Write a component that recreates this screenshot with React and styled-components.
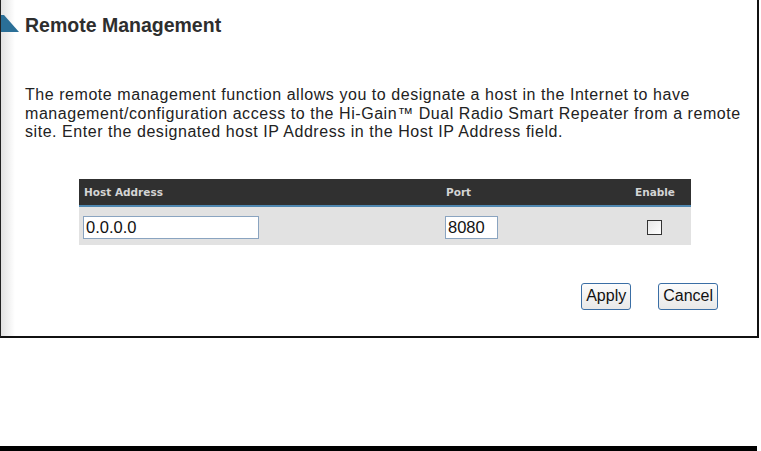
import React from "react";
import styled, { createGlobalStyle } from "styled-components";

const Global = createGlobalStyle`
  html, body { margin: 0; padding: 0; background: #fff; }
  body { width: 761px; height: 451px; overflow: hidden; font-family: "Liberation Sans", Arial, sans-serif; }
`;

const Page = styled.div`
  display: flex;
  flex-direction: column;
  width: 761px;
  height: 451px;
`;

const Frame = styled.div`
  width: 759px;
  height: 338px;
  box-sizing: border-box;
  border-left: 1px solid #222;
  border-right: 2px solid #111;
  border-bottom: 2px solid #111;
  background: linear-gradient(to right, #e2e2e2 0px, #fff 14px);
  position: relative;
  display: flex;
  flex-direction: column;
  padding: 14px 0 0 24px;
`;

const Marker = styled.svg`
  position: absolute;
  left: 0;
  top: 15px;
`;

const Title = styled.h1`
  margin: 0;
  font-size: 19.5px;
  line-height: 22px;
  font-weight: bold;
  color: #2e2e2e;
`;

const Para = styled.p`
  margin: 50px 0 0 0;
  font-size: 16px;
  line-height: 18.5px;
  letter-spacing: 0.55px;
  color: #222;
  width: 730px;
`;

const Table = styled.div`
  margin: 37px 0 0 54px;
  width: 612px;
  display: flex;
  flex-direction: column;
`;

const cols = `grid-template-columns: 362px 1fr 80px;`;

const HeadRow = styled.div`
  display: grid;
  ${cols}
  height: 25px;
  align-items: center;
  background: #303030;
  border-bottom: 2px solid #4f87b0;
  padding: 1px 16px 0 5px;
  box-sizing: content-box;
  font-family: "DejaVu Sans", Verdana, sans-serif;
  font-size: 10.5px;
  font-weight: bold;
  color: #d4d4d4;
`;

const HeadCell = styled.div`
  text-align: ${(p) => p.align || "left"};
`;

const DataRow = styled.div`
  display: grid;
  ${cols}
  height: 38px;
  box-sizing: border-box;
  align-items: start;
  background: #e2e2e2;
  padding: 9px 16px 0 4px;
`;

const TextInput = styled.input`
  box-sizing: border-box;
  width: ${(p) => p.w}px;
  height: 23px;
  border: 1px solid #8aa4c0;
  background: #fff;
  font-family: "Liberation Sans", Arial, sans-serif;
  font-size: 16.5px;
  color: #111;
  padding: 1px 2px;
  outline: none;
`;

const Check = styled.div`
  justify-self: end;
  margin: 4px 13px 0 0;
  width: 15px;
  height: 15px;
  box-sizing: border-box;
  border: 1px solid #333;
  background: linear-gradient(135deg, #e6e6e6, #fff);
`;

const Buttons = styled.div`
  display: flex;
  justify-content: flex-end;
  gap: 27px;
  margin: 38px 39px 0 0;
`;

const Button = styled.button`
  box-sizing: border-box;
  height: 27px;
  padding: 0 4px;
  border: 1px solid #3a6ea5;
  border-radius: 3px;
  background: linear-gradient(#fcfcfc, #e8e8e8);
  font-family: "Liberation Sans", Arial, sans-serif;
  font-size: 16px;
  color: #111;
`;

const Spacer = styled.div`
  flex: 1;
`;

const BottomBar = styled.div`
  width: 757px;
  height: 5px;
  background: #000;
`;

export default function App() {
  return (
    <Page>
      <Global />
      <Frame>
        <Marker width="18" height="17" viewBox="0 0 18 17">
          <polygon points="0,0 3,0 18,17 0,17" fill="#2a6f97" />
        </Marker>
        <Title>Remote Management</Title>
        <Para>
          The remote management function allows you to designate a host in the Internet to have
          management/configuration access to the Hi-Gain™ Dual Radio Smart Repeater from a remote
          site. Enter the designated host IP Address in the Host IP Address field.
        </Para>
        <Table>
          <HeadRow>
            <HeadCell>Host Address</HeadCell>
            <HeadCell>Port</HeadCell>
            <HeadCell align="right">Enable</HeadCell>
          </HeadRow>
          <DataRow>
            <TextInput w={176} defaultValue="0.0.0.0" />
            <TextInput w={53} defaultValue="8080" />
            <Check />
          </DataRow>
        </Table>
        <Buttons>
          <Button>Apply</Button>
          <Button>Cancel</Button>
        </Buttons>
      </Frame>
      <Spacer />
      <BottomBar />
    </Page>
  );
}
